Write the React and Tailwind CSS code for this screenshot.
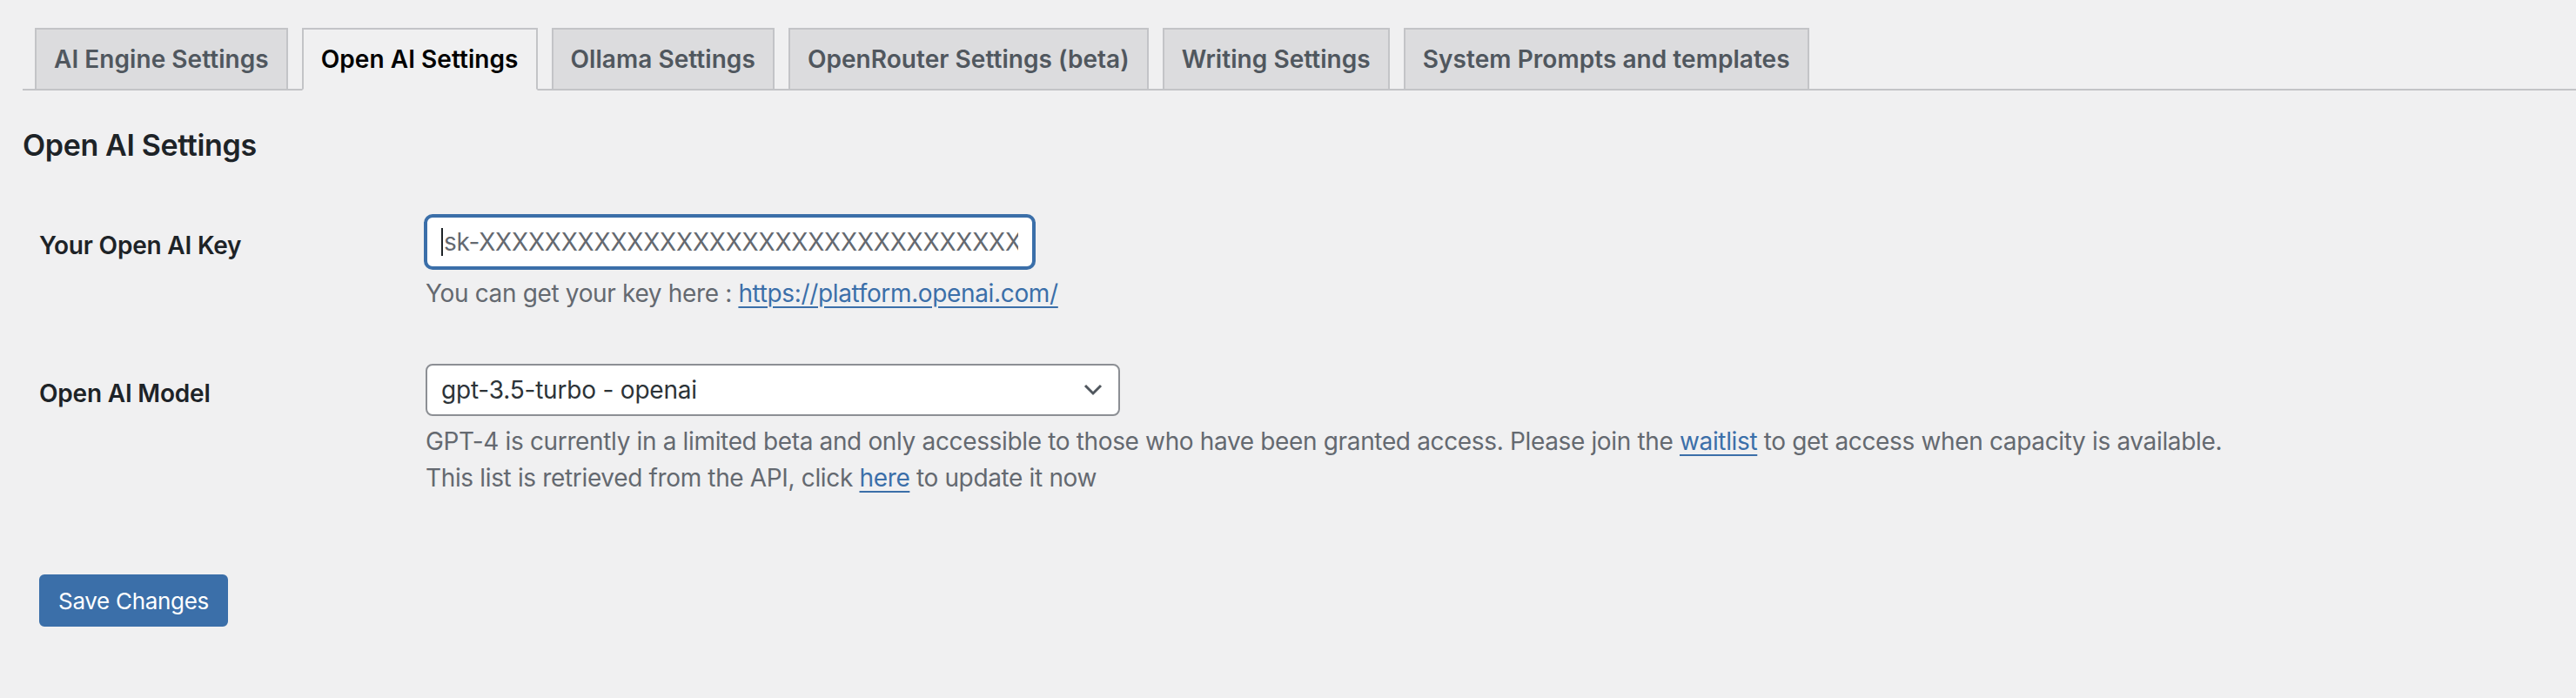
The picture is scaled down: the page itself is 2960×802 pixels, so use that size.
import React from "react";

const tabs = [
  "AI Engine Settings",
  "Open AI Settings",
  "Ollama Settings",
  "OpenRouter Settings (beta)",
  "Writing Settings",
  "System Prompts and templates",
];

const ACTIVE = 1;

function Tab({ label, active, first }) {
  const margin = first ? "ml-[14px]" : "ml-[16px]";
  if (active) {
    return (
      <div className={`${margin} -mb-[2px] border-2 border-b-2 border-[#c3c4c7] border-b-[#f0f0f1] bg-[#f0f0f1] px-[20px] py-[10px] text-[28px] leading-[48px] font-semibold tracking-[0.05px] text-black`}>
        {label}
      </div>
    );
  }
  return (
    <div className={`${margin} border-2 border-b-0 border-[#c3c4c7] bg-[#dcdcde] px-[20px] py-[10px] text-[28px] leading-[48px] font-semibold tracking-[0.05px] text-[#50575e]`}>
      {label}
    </div>
  );
}

export default function App() {
  const key = "sk-" + "X".repeat(48);
  return (
    <div
      className="min-h-[802px] w-full bg-[#f0f0f1] pl-[26px]"
      style={{ fontFamily: "Inter, 'Noto Sans', sans-serif" }}
    >
      {/* Tabs */}
      <div className="flex items-end border-b-2 border-[#c3c4c7] pt-[32px]">
        {tabs.map((t, i) => (
          <Tab key={t} label={t} active={i === ACTIVE} first={i === 0} />
        ))}
      </div>

      {/* Heading */}
      <h2 className="mt-[41px] text-[34px] leading-[44px] font-semibold tracking-[-0.35px] text-[#1d2327]">
        Open AI Settings
      </h2>

      {/* Form */}
      <div className="mt-[29px] pl-[19px]">
        {/* Row 1 */}
        <div className="grid grid-cols-[444px_1fr]">
          <div className="pt-[46px] text-[28px] leading-[36px] font-semibold tracking-[-0.2px] text-[#1d2327]">
            Your Open AI Key
          </div>
          <div className="py-[30px]">
            <div className="flex h-[60px] w-[699px] items-center rounded-[8px] border-2 border-[#3b6fa9] bg-white px-[16px] shadow-[0_0_0_2px_#3b6fa9]">
              <div className="flex min-w-0 flex-1 items-center overflow-hidden whitespace-nowrap text-[28px] tracking-[-0.2px] text-[#646970]">
                <span className="mr-[1px] inline-block h-[32px] w-[2px] shrink-0 bg-[#1d2327]" />
                <span>{key}</span>
              </div>
            </div>
            <p className="mt-[8px] text-[28px] leading-[42px] tracking-[-0.35px] text-[#646970]">
              You can get your key here :{" "}
              <a className="text-[#3b6fa9] underline decoration-2 underline-offset-[5px]" href="#">
                https://platform.openai.com/
              </a>
            </p>
          </div>
        </div>

        {/* Row 2 */}
        <div className="grid grid-cols-[444px_1fr]">
          <div className="pt-[46px] text-[28px] leading-[36px] font-semibold tracking-[-0.2px] text-[#1d2327]">
            Open AI Model
          </div>
          <div className="py-[30px]">
            <div className="flex h-[60px] w-[798px] items-center justify-between rounded-[8px] border-2 border-[#8c8f94] bg-white pl-[16px] pr-[16px] text-[28px] tracking-[-0.2px] text-[#2c3338]">
              <span>gpt-3.5-turbo - openai</span>
              <svg width="22" height="14" viewBox="0 0 22 14" className="mr-[2px]">
                <path d="M2 2 L11 11 L20 2" fill="none" stroke="#50575e" strokeWidth="3" />
              </svg>
            </div>
            <p className="mt-[8px] text-[28px] leading-[42px] tracking-[-0.35px] text-[#646970]">
              GPT-4 is currently in a limited beta and only accessible to those who have been granted access. Please join the{" "}
              <a className="text-[#3b6fa9] underline decoration-2 underline-offset-[5px]" href="#">
                waitlist
              </a>{" "}
              to get access when capacity is available.
              <br />
              This list is retrieved from the API, click{" "}
              <a className="text-[#3b6fa9] underline decoration-2 underline-offset-[5px]" href="#">
                here
              </a>{" "}
              to update it now
            </p>
          </div>
        </div>

        {/* Submit */}
        <div className="mt-[60px]">
          <button className="h-[60px] rounded-[6px] border-2 border-[#3b6fa9] bg-[#3b6fa9] px-[20px] text-[26px] tracking-[-0.3px] text-white">
            Save Changes
          </button>
        </div>
      </div>
    </div>
  );
}
